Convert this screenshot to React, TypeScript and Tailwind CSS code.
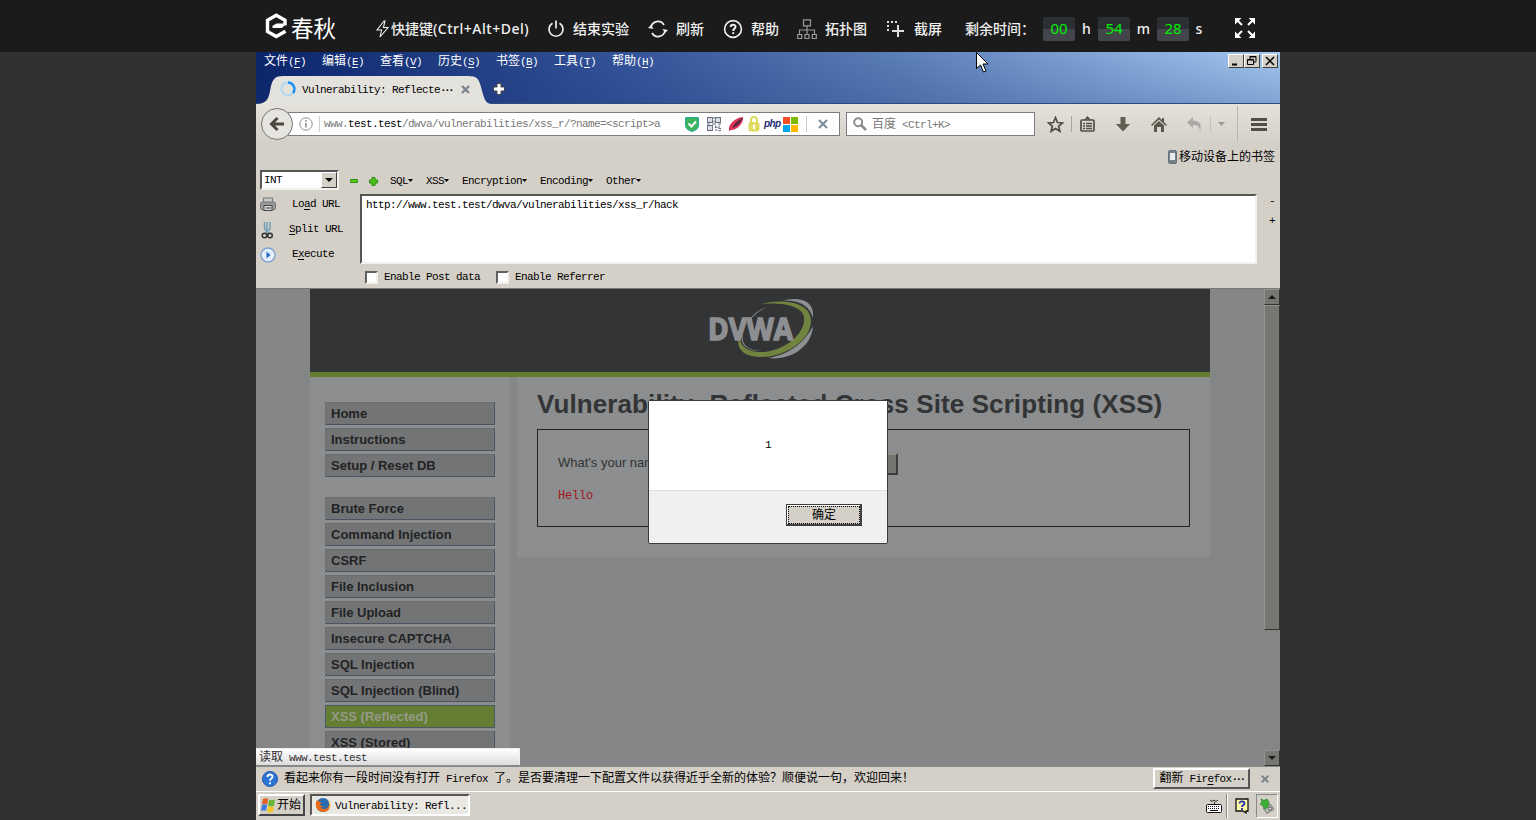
import React from "react";

const MONO = "font-['Liberation_Mono','Noto_Sans_CJK_SC',monospace] text-[11px] tracking-[-0.6px]";
const CJK = "font-['Noto_Sans_CJK_SC',sans-serif] text-[12px] tracking-normal";

function T({ s, u }: { s: string; u?: string }) {
  const parts = s.match(/[\x00-\x7f]+|⋯|[^\x00-\x7f⋯]+/g) || [];
  const mixed = /[^\x00-\x7f⋯]/.test(s);
  return (
    <span className={"inline-block pb-[2px] align-top leading-[14px] whitespace-pre " + (mixed ? CJK : MONO)}>
      {parts.map((p, i) => {
        if (p === "⋯") return <span key={i} className="font-['Liberation_Mono',monospace] text-[11px] font-bold tracking-[-2.6px]">···</span>;
        if (/[^\x00-\x7f]/.test(p)) return <span key={i} className={CJK}>{p}</span>;
        const k = u ? p.indexOf(u) : -1;
        return (
          <span key={i} className={MONO}>
            {k < 0 ? p : (<>{p.slice(0, k)}<span className="underline underline-offset-2">{u}</span>{p.slice(k + 1)}</>)}
          </span>
        );
      })}
    </span>
  );
}

const BarText = "font-['Noto_Sans','Noto_Sans_CJK_SC',sans-serif] text-[14px] leading-5 font-medium whitespace-nowrap text-[#f0f0f0]";

function Logo() {
  return (
    <div className="flex h-[27px] items-center">
      <svg width="24" height="27" viewBox="0 0 24 27" className="block shrink-0">
        <path d="M20 12.500V7.300L11.300 2.300 2.500 7.300V18.500L11.300 23.500 20.500 18.200" fill="none" stroke="#fff" strokeWidth="3.400" />
        <path d="M7.500 12.800l4-2.200h9.800l-4.300 4.400H7.500z" fill="#fff" />
      </svg>
      <span className="ml-[2px] font-['Noto_Sans_CJK_SC',sans-serif] text-[22.500px] leading-9 whitespace-nowrap text-white">春秋</span>
    </div>
  );
}

function TopBar() {
  return (
    <header className="flex h-[52px] shrink-0 bg-[#1b1b1b]">
      <div className="ml-[265px] mt-[13px] w-[110px]"><Logo /></div>
      <div className="mt-[19px] flex h-5 w-[172px] items-center">
        <svg width="16" height="18" viewBox="0 0 16 18"><path d="M9 1L2 10h4.600L5 17l8-9.500H8.400L10 1z" fill="none" stroke="#eee" strokeWidth="1.1" /></svg>
        <span className={BarText}>快捷键<span className="tracking-[0.5px]">(Ctrl+Alt+Del)</span></span>
      </div>
      <div className="mt-[19px] flex h-5 w-[101px] items-center gap-[8px]">
        <svg width="18" height="18" viewBox="0 0 18 18" fill="none" stroke="#f0f0f0" strokeWidth="1.7"><path d="M5.500 3.200a7 7 0 1 0 7 0M9 .5v8" /></svg>
        <span className={BarText}>结束实验</span>
      </div>
      <div className="mt-[19px] flex h-5 w-[75px] items-center gap-[8px]">
        <svg width="20" height="18" viewBox="0 0 20 18" fill="none" stroke="#f0f0f0" strokeWidth="1.7"><path d="M3 7.500A7 7 0 0 1 16 5M17 10.500A7 7 0 0 1 4 13" /><path d="M0 8l5.500 1L3 5zM20 10l-5.500-1 2.500 4z" fill="#f0f0f0" stroke="none" /></svg>
        <span className={BarText}>刷新</span>
      </div>
      <div className="mt-[19px] flex h-5 w-[73px] items-center gap-[8px]">
        <svg width="20" height="20" viewBox="0 0 20 20" fill="none" stroke="#f0f0f0" strokeWidth="1.6"><circle cx="10" cy="10" r="8.400" /><path d="M7.700 8c0-3 4.800-3 4.800-.2 0 1.900-2.300 1.800-2.300 4.100M10.200 13.200v1.700" strokeWidth="2" /></svg>
        <span className={BarText}>帮助</span>
      </div>
      <div className="mt-[19px] flex h-5 w-[90px] items-center gap-[8px]">
        <svg width="20" height="20" viewBox="0 0 20 20" className="ml-px" fill="none" stroke="#999" strokeWidth="1.2"><path d="M6.500.8h7v6h-7zM10 7v8M2.500 15v-4h15v4M.7 15.500h4v4h-4zM8 15.500h4v4H8zM15.300 15.500h4v4h-4z" /></svg>
        <span className={BarText}>拓扑图</span>
      </div>
      <div className="mt-[19px] flex h-5 w-[79px] items-center gap-[9px]">
        <svg width="18" height="18" viewBox="0 0 18 18" className="ml-px" fill="#ddd"><path d="M0 1h2v2H0zM4 1h2v2H4zM8 1h2v2H8zM0 5h2v2H0zM0 9h2v2H0zM10 5h2v12h-2zM5 10h12v2H5z" /></svg>
        <span className={BarText}>截屏</span>
      </div>
      <div className="mt-[17px] flex h-6 items-center">
        <span className={BarText + " block w-[78px]"}>剩余时间：</span>
        {[["00", "h"], ["54", "m"], ["28", "s"]].map(([n, l], i) => (
          <React.Fragment key={l}>
            <span className="flex h-6 w-8 items-center justify-center rounded-[2px] bg-linear-to-b from-[#2b2f33] from-50% to-[#42464b] to-50% pb-[2px] font-['Noto_Sans',sans-serif] text-[15px] leading-5 text-[#00f000]">{n}</span>
            <span className={BarText + (i === 0 ? " w-[23px]" : i === 1 ? " w-[27px]" : " w-[20px]") + " text-center"}>{l}</span>
          </React.Fragment>
        ))}
      </div>
      <svg width="20" height="20" viewBox="0 0 20 20" className="mt-[18px] ml-[26px]" fill="#fff" stroke="#fff" strokeWidth="2"><path d="M2 2l5 5M18 2l-5 5M2 18l5-5M18 18l-5-5" /><path d="M0 0h6.500L0 6.500zM20 0v6.500L13.500 0zM0 20v-6.500L6.500 20zM20 20h-6.500L20 13.500z" stroke="none" /></svg>
    </header>
  );
}

function WinBtn({ children }: { children: React.ReactNode }) {
  return <div className="flex h-[14px] w-4 items-center justify-center border border-t-white border-l-white border-r-[#404040] border-b-[#404040] bg-[#d4d0c8]"><svg width="12" height="12" viewBox="0 0 12 12" fill="none" stroke="#000" className="shrink-0">{children}</svg></div>;
}

function TitleArea() {
  const menu = [["文件", "F"], ["编辑", "E"], ["查看", "V"], ["历史", "S"], ["书签", "B"], ["工具", "T"], ["帮助", "H"]];
  return (
    <div className="h-[52px] shrink-0 border-b border-[#2d4a80] bg-[linear-gradient(to_bottom,transparent,rgba(25,50,120,0.25)),linear-gradient(100deg,#0a246a_0%,#34549a_36%,#5c80b8_63%,#88acdc_85%,#a6caf0_100%)]">
      <div className="flex h-[22px] text-white">
        <div className="flex grow pt-px pl-2">
          {menu.map(([a, b]) => <div key={b} className="w-[58px]"><T s={a + "(" + b + ")"} u={b} /></div>)}
        </div>
        <div className="mt-[2px] mr-[2px] flex">
          <WinBtn><path d="M2 9.500h5" strokeWidth="2" /></WinBtn>
          <WinBtn><path d="M4 1.500h6v5M4 1v3M1.500 4.500h6v5h-6zM1 5h7M4 2h6M8 7h2" /></WinBtn>
          <div className="ml-[2px]"><WinBtn><path d="M2 2l8 8M10 2l-8 8" strokeWidth="1.5" /></WinBtn></div>
        </div>
      </div>
      <div className="relative flex h-[30px]">
        <svg width="236" height="30" viewBox="0 0 236 30" className="absolute top-0 left-0"><path d="M0 30C13 30 13 22 15 12 17 5 19 2 27 2H212C221 2 223 5 225 13 228 24 229 30 236 30z" fill="#e4e2dc" /></svg>
        <div className="relative flex grow items-center pl-6">
          <svg width="16" height="16" viewBox="0 0 16 16" fill="none" strokeWidth="2.4"><circle cx="8" cy="8" r="6.500" stroke="#b7d9ef" /><path d="M8 1.500A6.500 6.500 0 0 1 13 12" stroke="#1e90f0" /></svg>
          <span className="ml-[6px] flex w-[159px] pt-[3px] text-black"><T s="Vulnerability: Reflecte⋯" /></span>
          <svg width="9" height="9" viewBox="0 0 9 9" stroke="#7c858b" strokeWidth="2.4"><path d="M1 1l7 7M8 1l-7 7" /></svg>
          <svg width="12" height="12" viewBox="0 0 12 12" className="ml-[23px]"><path d="M4 .5h4V4h3.500v4H8v3.500H4V8H.5V4H4z" fill="#fff" stroke="#444" /></svg>
        </div>
      </div>
    </div>
  );
}

function NavBar() {
  return (
    <div className="flex h-10 shrink-0 items-center bg-linear-to-b from-[#e4e2dc] to-[#d4d0c8]">
      <div className="relative z-10 ml-[5px] flex size-8 items-center justify-center rounded-full border border-[#777] bg-[#e6e4df]">
        <svg width="16" height="16" viewBox="0 0 16 16" fill="none" stroke="#4a4840" strokeWidth="3"><path d="M15 8H3M8.500 2L2.500 8l6 6" /></svg>
      </div>
      <div className="-ml-[5px] flex h-[24px] w-[552px] items-center border border-[#7d7d7d] bg-white pl-[10px]">
        <svg width="14" height="14" viewBox="0 0 14 14" fill="none" stroke="#909090"><circle cx="7" cy="7" r="6.200" /><path d="M7 6v4.500M7 3v1.800" strokeWidth="1.600" /></svg>
        <div className="mr-1 ml-[6px] h-4 w-px bg-[#ccc]" />
        <div className="flex w-[361px] pt-[2px] text-[#777]"><T s="www." /><span className="flex text-black"><T s="test.test" /></span><T s="/dwva/vulnerabilities/xss_r/?name=<script>a" /></div>
        <svg width="14" height="15" viewBox="0 0 14 15"><path d="M.5.5h13v8q0 4-6.500 6-6.500-2-6.500-6z" fill="#3cb45c" stroke="#31a6a0" /><path d="M3.500 6.500l3 3 4.500-5" fill="none" stroke="#fff" strokeWidth="2" /></svg>
        <svg width="14" height="14" viewBox="0 0 14 14" className="ml-2" fill="none" stroke="#667080" strokeWidth="1.100"><path d="M.6.6h4.800v4.800H.6zM8.600.6h4.800v4.800H8.600zM.6 8.600h4.800v4.800H.6zM2.500 3h1M10.500 3h1M2.500 11h1M7 0v2M7 3.500v2M0 7h3M5 7h4M11 7h3M8.500 8.500v2h2M12 8.500v3h2M8 13h2.500M11.500 13.500h2.500" /></svg>
        <svg width="16" height="16" viewBox="0 0 16 16" className="ml-[7px]"><path d="M1 14.500C0 8 7 2 15 1c1 5-5 13-12 13l-2 1z" fill="#dc3558" /><path d="M4 12C6 8 10 4 14.500 1.500 13 7 9 11 4 12z" fill="#5c2540" /></svg>
        <svg width="12" height="16" viewBox="0 0 12 16" className="ml-[4px]"><path d="M3 7V4a3 3 0 0 1 6 0v3" fill="none" stroke="#dedb60" strokeWidth="2" /><rect x=".5" y="6" width="11" height="9.500" rx="2.500" fill="#dedb60" /><path d="M6 8.500v4.500" stroke="#fff" strokeWidth="2" /></svg>
        <span className="ml-[4px] w-[19px] font-['Liberation_Sans',sans-serif] text-[10px] leading-3 font-bold tracking-[-0.6px] text-[#1f2f7a] italic">php</span>
        <div className="grid size-[15px] grid-cols-2 gap-px"><i className="bg-[#f25022]" /><i className="bg-[#7fba00]" /><i className="bg-[#00a4ef]" /><i className="bg-[#ffb900]" /></div>
        <div className="ml-[8px] h-4 w-px bg-[#ccc]" />
        <svg width="10" height="10" viewBox="0 0 10 10" className="ml-[11px]" stroke="#7b8a99" strokeWidth="2"><path d="M1 1l8 8M9 1L1 9" /></svg>
      </div>
      <div className="ml-[6px] flex h-[24px] w-[189px] items-center border border-[#7d7d7d] bg-white pl-[6px] text-[#777]">
        <svg width="14" height="14" viewBox="0 0 14 14" fill="none" stroke="#8c8c8c" strokeWidth="2"><circle cx="5.200" cy="5.200" r="4" /><path d="M8 8l5 5" strokeWidth="2.600" /></svg>
        <span className="ml-[5px] flex pt-px"><T s="百度 <Ctrl+K>" /></span>
      </div>
      <svg width="17" height="17" viewBox="0 0 17 17" className="ml-3" fill="none" stroke="#4f4d44" strokeWidth="1.700"><path d="M8.500 1.500l2 5 5 .4-3.900 3.400 1.300 5-4.400-2.800-4.400 2.800 1.300-5L1.500 6.900l5-.4z" /></svg>
      <div className="ml-[7px] h-4 w-px bg-[#aaa69e]" />
      <svg width="15" height="16" viewBox="0 0 15 16" className="ml-2" fill="none" stroke="#4f4d44" strokeWidth="1.700"><rect x="1" y="4" width="13" height="11" rx="1" /><path d="M5 4L7.500 1 10 4M3 7.500h2M6 7.500h6M3 10h2M6 10h6M3 12.500h2M6 12.500h6" strokeWidth="1.300" /></svg>
      <svg width="14" height="15" viewBox="0 0 14 15" className="ml-[21px]" fill="#625e53"><path d="M4.500 0h5v7H14l-7 7.500L0 7h4.500z" /></svg>
      <svg width="16" height="15" viewBox="0 0 16 15" className="ml-[21px]" fill="#5b574c"><path d="M8 0l3 3V1h2v4l3 3-1 1-7-6.500L1 9 0 8zM3 8.500L8 4l5 4.500V15h-3v-5H6v5H3z" /></svg>
      <svg width="16" height="15" viewBox="0 0 16 15" className="ml-5" fill="#aaa9a6"><path d="M0 5.500L6 0v3.500c7 0 9 4 7 11 0-4-2-7-7-6.500V11z" /></svg>
      <div className="ml-[7px] h-4 w-px bg-[#c5c1b9]" />
      <svg width="7" height="4" viewBox="0 0 7 4" className="ml-[7px]" fill="#999"><path d="M0 0h7L3.500 4z" /></svg>
      <div className="ml-3 h-9 w-px bg-[#bcb8b0]" />
      <div className="ml-[13px] flex w-4 flex-col gap-[2px]"><i className="h-[3px] bg-[#514f46]" /><i className="h-[3px] bg-[#514f46]" /><i className="h-[3px] bg-[#514f46]" /></div>
    </div>
  );
}

function Check({ label }: { label: string }) {
  return (
    <div className="flex items-center">
      <i className="mr-[6px] size-[13px] border-2 border-t-[#606060] border-l-[#606060] border-r-[#f2f0ea] border-b-[#f2f0ea] bg-white" />
      <span className="flex pt-[2px]"><T s={label} /></span>
    </div>
  );
}

function HackBar() {
  return (
    <div className="flex h-[121px] shrink-0 flex-col border-b border-[#777] bg-[#d4d0c8] text-black">
      <div className="flex h-[24px] items-center">
        <div className="ml-1 flex h-[20px] w-[79px] items-center border-2 border-t-[#555] border-l-[#555] border-r-[#f4f2ee] border-b-[#f4f2ee] bg-white pl-[2px]">
          <span className="flex grow pt-[2px]"><T s="INT" /></span>
          <div className="flex h-full w-4 items-center justify-center border border-t-white border-l-white border-r-[#404040] border-b-[#404040] bg-[#d4d0c8]"><svg width="8" height="4" viewBox="0 0 8 4"><path d="M0 0h8L4 4z" /></svg></div>
        </div>
        <i className="mt-[2px] ml-[11px] h-[4px] w-2 rounded-[1px] border border-[#2a8a10] bg-[#58d020]" />
        <svg width="9" height="9" viewBox="0 0 9 9" className="mt-[2px] ml-[11px]"><path d="M3 .5h3V3h2.500v3H6v2.500H3V6H.5V3H3z" fill="#4cc81c" stroke="#2a8a10" /></svg>
        <div className="ml-3 flex pt-[3px]">
          {[["SQL", "w-[36px]"], ["XSS", "w-[36px]"], ["Encryption", "w-[78px]"], ["Encoding", "w-[66px]"], ["Other", "w-[50px]"]].map(([s, w]) => (
            <div key={s} className={"flex items-center " + w}><T s={s} /><svg width="5" height="3" viewBox="0 0 5 3" className="mb-[2px]"><path d="M0 0h5L2.500 3z" /></svg></div>
          ))}
        </div>
      </div>
      <div className="flex h-[74px]">
        <div className="w-[104px] pl-1">
          <div className="flex h-[25px] items-center">
            <svg width="16" height="15" viewBox="0 0 16 15" fill="#c9c9c9" stroke="#777"><path d="M3.500 1h9v5h-9z" /><rect x=".5" y="5" width="15" height="8" rx="2" fill="#999" /><path d="M4 8.500h8v5H4z" fill="#ddd" stroke="#444" /><path d="M6 11h5" stroke="#333" /></svg>
            <span className="ml-4 flex pt-px"><T s="Load URL" u="a" /></span>
          </div>
          <div className="flex h-[25px] items-center">
            <svg width="14" height="18" viewBox="0 0 14 18" fill="none"><path d="M4.500 1v7l4 4M10 1v7l-4 4M7 1v8" stroke="#6c9eb4" strokeWidth="1.500" /><circle cx="4.500" cy="14.500" r="2.300" stroke="#333" strokeWidth="1.500" /><circle cx="10" cy="14.500" r="2.300" stroke="#333" strokeWidth="1.500" /></svg>
            <span className="ml-[15px] flex pt-px"><T s="Split URL" u="S" /></span>
          </div>
          <div className="flex h-[25px] items-center">
            <svg width="16" height="16" viewBox="0 0 16 16"><circle cx="8" cy="8" r="7" fill="#e3eefb" stroke="#7ea0cf" strokeWidth="1.300" /><path d="M6.500 4.500L10.500 8l-4 3.500z" fill="#2868bd" /></svg>
            <span className="ml-4 flex pt-px"><T s="Execute" u="x" /></span>
          </div>
        </div>
        <div className="mt-[2px] h-[70px] w-[897px] border-2 border-t-[#555] border-l-[#555] border-r-[#f4f2ee] border-b-[#f4f2ee] bg-white px-1 pt-[2px]"><T s="http://www.test.test/dwva/vulnerabilities/xss_r/hack" /></div>
        <div className="flex flex-col gap-1 pt-[2px] pl-[12px]"><T s="-" /><T s="+" /></div>
      </div>
      <div className="flex items-center gap-4 pt-[2px] pl-[109px]"><Check label="Enable Post data" /><Check label="Enable Referrer" /></div>
    </div>
  );
}

function MenuItem({ label, active }: { label: string; active?: boolean }) {
  return <div className={"h-[23px] border pl-[5px] text-[13px] leading-[22px] font-bold whitespace-nowrap " + (active ? "border-[#4b5a68] bg-[#668033] text-[#999c8c]" : "border-t-[#6c6e70] border-l-[#6c6e70] border-r-[#4d5364] border-b-[#4d5364] bg-[#757677] text-[#222324]")}>{label}</div>;
}

function Dvwa() {
  return (
    <svg width="110" height="66" viewBox="0 0 110 66">
      <path d="M73 4C91 -1 107 3 105 21 103 14 99 9 92 6 87 4 80 3 73 4z" fill="#909294" />
      <path d="M105 29C104 50 82 64 60 61 84 57 98 43 105 29z" fill="#909294" />
      <path d="M53 7C78 1 103 6 103 24 103 44 75 61 51 60 33 59 27 49 32 39 31 51 43 56 57 55 81 52 98 34 96 20 94 9 75 5 53 7z" fill="#728640" />
      <path d="M59 10C42 17 29 37 37 48 40 52 46 53 52 54 37 54 31 46 35 36 38 25 46 14 59 10z" fill="#909294" />
      <text x="0" y="43" fontFamily="'Open Sans'" fontWeight="700" fontSize="31" textLength="85" lengthAdjust="spacingAndGlyphs" fill="#909294" stroke="#909294" strokeWidth="1.600">DVWA</text>
    </svg>
  );
}

function Arrow({ up }: { up?: boolean }) {
  return <div className="flex h-4 w-4 shrink-0 items-center justify-center border border-t-[#92938f] border-l-[#92938f] border-r-[#333] border-b-[#333] bg-[#777673]"><svg width="8" height="4" viewBox="0 0 8 4"><path d={up ? "M0 4h8L4 0z" : "M0 0h8L4 4z"} fill="#1a1a1a" /></svg></div>;
}

function Page() {
  const groups = [["Home", "Instructions", "Setup / Reset DB"], ["Brute Force", "Command Injection", "CSRF", "File Inclusion", "File Upload", "Insecure CAPTCHA", "SQL Injection", "SQL Injection (Blind)", "XSS (Reflected)", "XSS (Stored)"]];
  return (
    <div className="relative flex h-[477px] shrink-0 overflow-hidden bg-[#868889] font-['Liberation_Sans',Arial,sans-serif]">
      <main className="ml-[54px] w-[900px]">
        <div className="flex h-[88px] border-b-5 border-[#668033] bg-[#333435] pt-2 pl-[398px]"><Dvwa /></div>
        <div className="flex items-start">
          <div className="flex h-[389px] w-[200px] flex-col gap-5 bg-[#8e9091] pt-[25px] pr-[15px] pl-[15px]">
            {groups.map((g, i) => <div key={i} className="flex flex-col gap-[3px]">{g.map((s) => <MenuItem key={s} label={s} active={s === "XSS (Reflected)"} />)}</div>)}
          </div>
          <div className="ml-[7px] h-[180px] w-[693px] bg-[#8e9091] px-5 pt-[10px]">
            <h1 className="text-[26px] leading-[34px] font-bold tracking-[0.1px] whitespace-nowrap text-[#333435]">Vulnerability: Reflected Cross Site Scripting (XSS)</h1>
            <div className="mt-2 h-[98px] border border-[#222] pt-[22px] pl-5">
              <div className="flex h-[23px] items-center text-[13px] text-[#333435]"><span className="w-[120px] pb-[2px]">What's your name?</span><span className="h-5 w-[160px]" /><span className="h-[22px] w-[60px] border-2 border-t-[#92938f] border-l-[#92938f] border-r-[#3c3c3c] border-b-[#3c3c3c] bg-[#777673]" /></div>
              <div className="mt-[13px] font-['Liberation_Mono',monospace] text-[12px] leading-4 tracking-[-0.2px] text-[#a8161e]">Hello</div>
            </div>
          </div>
        </div>
      </main>
      <div className="absolute inset-0 bg-[radial-gradient(circle,rgba(50,55,60,0.13)_0.5px,transparent_1.1px),radial-gradient(circle,rgba(50,55,60,0.13)_0.5px,transparent_1.1px)] bg-size-[4px_4px] bg-position-[0_0,2px_2px] opacity-60" />
      <div className="absolute top-0 right-0 flex h-full w-4 flex-col bg-[#858585]">
        <Arrow up />
        <div className="h-[325px] border border-t-[#92938f] border-l-[#92938f] border-r-[#333] border-b-[#333] bg-[#777673]" />
        <div className="grow" />
        <Arrow />
      </div>
      <div className="absolute top-[111px] left-[392px] flex h-[144px] w-[240px] flex-col rounded-[2px] border border-[#3b3b3b] bg-[#f0f0f0] text-black">
        <div className="flex h-[90px] justify-center border-b border-[#dfdfdf] bg-white pt-[37px]"><T s="1" /></div>
        <div className="flex grow items-start justify-end pt-[13px] pr-[25px]">
          <div className="h-[22px] w-[76px] border border-r-2 border-b-2 border-[#404040] bg-white pt-px pl-px">
            <div className="flex h-full items-center justify-center border border-dotted border-black bg-[#d4d0c8]"><T s="确定" /></div>
          </div>
        </div>
      </div>
      <div className="absolute bottom-px left-0 flex h-[17px] w-[264px] border-t border-r border-[#eee] bg-linear-to-b from-white to-[#dcdcdc] pl-[3px] text-[#333]"><T s="读取 www.test.test" /></div>
    </div>
  );
}

function Bottom() {
  return (
    <>
      <div className="flex h-[26px] shrink-0 items-center border-t border-[#888] border-b border-b-white bg-[#d4d0c8] text-black">
        <svg width="16" height="16" viewBox="0 0 16 16" className="mb-px ml-[6px]"><circle cx="8" cy="8" r="7.500" fill="#2d74d8" stroke="#2459a8" /><path d="M5.500 6c0-3.300 5-3.200 5-.3C10.500 7.600 8 7.500 8 9.700M8 11.300v2" fill="none" stroke="#fff" strokeWidth="1.900" /></svg>
        <span className="ml-[6px] flex grow pb-px"><T s="看起来你有一段时间没有打开 Firefox 了。是否要清理一下配置文件以获得近乎全新的体验？顺便说一句，欢迎回来！" /></span>
        <div className="mb-px flex h-[21px] w-[97px] items-center justify-center border-2 border-t-white border-l-white border-r-[#555] border-b-[#555]"><T s="翻新 Firefox⋯" u="e" /></div>
        <svg width="8" height="8" viewBox="0 0 8 8" className="mr-[11px] mb-px ml-[11px]" stroke="#7c858b" strokeWidth="2"><path d="M.7.7l6.600 6.600M7.300.7L.7 7.300" /></svg>
      </div>
      <div className="flex h-[28px] shrink-0 bg-[#d4d0c8] text-black">
        <div className="mt-[2px] ml-[2px] flex h-[22px] w-[47px] items-center border-2 border-t-white border-l-white border-r-[#444] border-b-[#444]">
          <svg width="17" height="16" viewBox="0 0 17 16"><path d="M3 2q3-1.500 5 0L7 8Q5 6 2 7.500z" fill="#e45a24" /><path d="M9 2.500q3 1.500 6 0L14 9q-3 1-6-.500z" fill="#67b436" /><path d="M2 8q3-1.500 5 0l-1 6q-2-1.500-5 0z" fill="#3c7be0" /><path d="M8 9q3 1.500 6 .5L13 15q-3 1-6-.500z" fill="#f4c628" /></svg>
          <T s="开始" />
        </div>
        <div className="mt-[2px] ml-[5px] flex h-[22px] w-[160px] items-center border-2 border-t-[#555] border-l-[#555] border-r-white border-b-white bg-[#eae8e3] pl-[3px]">
          <svg width="16" height="16" viewBox="0 0 16 16"><circle cx="8" cy="8" r="7" fill="#2b6cb0" /><path d="M2 3c-3 5 0 12 6 12 5 0 8-4 7-9-1 4-3 6-6 6-2 0-3-1-3-2 1 0 2 0 3-1H6L5 7l2-1z" fill="#e86a17" /><path d="M12 3c3 3 3 6 1 9 3-2 4-6-1-9z" fill="#ffc832" /></svg>
          <span className="ml-[4px] flex pt-[3px]"><T s="Vulnerability: Refl..." /></span>
        </div>
        <div className="grow" />
        <div className="flex items-center">
          <svg width="16" height="14" viewBox="0 0 16 14" className="mr-px" fill="none" stroke="#111"><path d="M4 1l2 1.500 2-1.500 2 1.500 2-1.500M8.500 3v2" strokeWidth=".9" /><rect x=".5" y="5.500" width="15" height="8" rx="1" fill="#fff" /><path d="M2 7.500h12M2 9.500h12" strokeDasharray="1 1" /><path d="M4 11.500h8" /></svg>
          <div className="ml-[3px] h-6 w-[2px] border-l border-[#888] bg-white" />
          <svg width="14" height="16" viewBox="0 0 14 16" className="ml-[7px]"><path d="M1 1h12v12h-2v2l-3-2H1z" fill="#fdfba8" stroke="#111" strokeWidth="1.300" /><path d="M4.500 5.500c0-3 5-2.500 5 0C9.500 7 7 7 7 9M7 10v2" fill="none" stroke="#1d2bb0" strokeWidth="1.800" /></svg>
          <div className="mr-[2px] ml-[7px] flex h-6 w-[22px] items-center justify-center border border-[#888] border-r-white border-b-white"><svg width="16" height="16" viewBox="0 0 16 16"><path d="M4 10l7-4 4 5-7 4.500z" fill="#b4b8b8" stroke="#666" strokeWidth=".8" /><circle cx="11" cy="10.500" r="1.500" fill="#eee" stroke="#555" /><path d="M2 1l3 1.500L8 1l2 3-1 5-3 2-2-3L1 6l2-2z" fill="#3eae35" stroke="#28802a" strokeWidth=".7" /></svg></div>
        </div>
      </div>
    </>
  );
}

export default function App() {
  return (
    <div className="relative flex h-[820px] w-[1536px] flex-col overflow-hidden bg-[#313131]">
      <TopBar />
      <div className="mx-auto flex h-[768px] w-[1024px] flex-col">
        <TitleArea />
        <NavBar />
        <div className="flex h-[24px] shrink-0 items-center justify-end bg-[#d4d0c8] pt-px pr-[5px] text-black">
          <svg width="9" height="14" viewBox="0 0 9 14" className="mr-[2px]"><rect x=".5" y=".5" width="8" height="13" rx="1.500" fill="#74818b" stroke="#67727b" /><path d="M2 3h5v7H2z" fill="#e8ebed" /></svg>
          <T s="移动设备上的书签" />
        </div>
        <HackBar />
        <Page />
        <Bottom />
      </div>
      <svg width="14" height="22" viewBox="0 0 14 22" className="absolute top-[52px] left-[976px]"><path d="M.5.500v16l4-3.500 3 7 2.500-1-3-7h5z" fill="#fff" stroke="#000" /></svg>
    </div>
  );
}
